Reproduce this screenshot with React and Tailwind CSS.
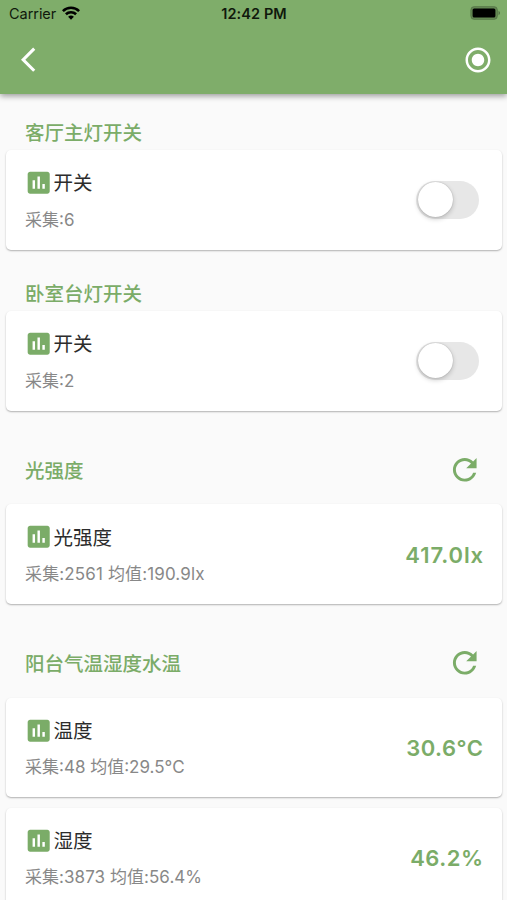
import React from 'react';

const SWITCHES = [
  { title: '客厅主灯开关', name: '开关', detail: '采集:6', gap: 'h-[56px] pt-[21px]' },
  { title: '卧室台灯开关', name: '开关', detail: '采集:2', gap: 'h-[61.5px] pt-[26px]' },
];

const SENSORS = [
  {
    title: '光强度',
    cards: [
      {
        name: '光强度',
        detail: '采集:2561 均值:190.9lx',
        detailSpacing: 'tracking-[0.13px]',
        value: '417.0lx',
        valueSpacing: 'tracking-[0.9px] mr-[18px]',
      },
    ],
  },
  {
    title: '阳台气温湿度水温',
    cards: [
      { name: '温度', detail: '采集:48 均值:29.5°C', value: '30.6°C', valueSpacing: 'tracking-[0.5px] mr-[18.5px]' },
      {
        name: '湿度',
        detail: '采集:3873 均值:56.4%',
        detailSpacing: 'tracking-[0.05px]',
        value: '46.2%',
        valueSpacing: 'tracking-[0.5px] mr-[18.5px]',
      },
    ],
  },
];

function Icon({ d, className }) {
  return (
    <svg viewBox="0 0 24 24" fill="currentColor" className={className}>
      <path d={d} />
    </svg>
  );
}

const CHART =
  'M19 3H5c-1.1 0-2 .9-2 2v14c0 1.1.9 2 2 2h14c1.1 0 2-.9 2-2V5c0-1.1-.9-2-2-2zM9 17H7v-7h2v7zm4 0h-2V7h2v10zm4 0h-2v-4h2v4z';
const REFRESH =
  'M17.65 6.35C16.2 4.9 14.21 4 12 4c-4.42 0-7.99 3.58-7.99 8s3.57 8 7.99 8c3.73 0 6.84-2.55 7.73-6h-2.08c-.82 2.33-3.04 4-5.65 4-3.31 0-6-2.69-6-6s2.69-6 6-6c1.66 0 3.14.69 4.22 1.78L13 11h7V4l-2.35 2.35z';
const BACK = 'M11.67 3.87L9.9 2.1 0 12l9.9 9.9 1.77-1.77L3.54 12z';
const RADIO =
  'M12 7c-2.76 0-5 2.24-5 5s2.24 5 5 5 5-2.24 5-5-2.24-5-5-5zm0-5C6.48 2 2 6.48 2 12s4.48 10 10 10 10-4.48 10-10S17.52 2 12 2zm0 18c-4.42 0-8-3.58-8-8s3.58-8 8-8 8 3.58 8 8-3.58 8-8 8z';

function StatusBar() {
  return (
    <div className="grid h-7 grid-cols-3 items-center pl-[9px] pr-[6px] text-[14.5px] leading-7 text-[#10190c]">
      <div className="flex items-center gap-[6px]">
        <span className="tracking-[-0.05px]">Carrier</span>
        <svg viewBox="0 0 18 14" className="-mt-[2px] h-[14px] w-[18px]">
          <g fill="none" stroke="#000" strokeWidth="2.6">
            <path d="M.9 5.1a11.6 11.6 0 0 1 16.2 0" />
            <path d="M3.9 8.3a7.3 7.3 0 0 1 10.2 0" />
          </g>
          <path d="M9 13.8l-2.9-3a4.2 4.2 0 0 1 5.8 0z" fill="#000" />
        </svg>
      </div>
      <div className="-ml-[2px] whitespace-nowrap text-center font-semibold tracking-[0.1px]">12:42 PM</div>
      <svg viewBox="0 0 31 14" className="-mt-[2px] h-[14px] w-[31px] justify-self-end">
        <rect x="0.7" y="0.4" width="26.8" height="13.2" rx="3.8" fill="#000" fillOpacity=".22" stroke="#000" strokeOpacity=".22" strokeWidth=".8" />
        <rect x="2.6" y="2.4" width="22.8" height="9.2" rx="1.6" fill="#000" />
        <path d="M28.6 4.8c1.6.8 1.6 3.6 0 4.4z" fill="#000" fillOpacity=".45" />
      </svg>
    </div>
  );
}

function Card({ name, detail, detailSpacing = '', children }) {
  return (
    <div className="ml-[6px] mr-[5px] flex h-[99.5px] shrink-0 items-center justify-between rounded-[5px] bg-white pl-[19px] shadow-[0_1px_2px_rgba(0,0,0,0.26),0_1px_1px_rgba(0,0,0,0.05)]">
      <div className="flex flex-col pt-px">
        <div className="flex h-[30px] items-center">
          <Icon d={CHART} className="-ml-px size-[29.4px] text-[#7bac68]" />
          <span className="pt-px text-[19.5px] leading-[30px] text-[#2c2c2c]">{name}</span>
        </div>
        <span className={`-mb-px mt-[8px] whitespace-nowrap text-[17px] leading-[28px] text-[#888] ${detailSpacing}`}>
          {detail}
        </span>
      </div>
      {children}
    </div>
  );
}

function Toggle() {
  return (
    <button className="mr-[23px] flex h-[38px] w-[63px] items-center rounded-full bg-[#e7e7e7] pl-[1.5px]">
      <span className="size-[35px] rounded-full bg-white shadow-[0_2px_5px_rgba(0,0,0,0.2),0_0_1px_rgba(0,0,0,0.3)]" />
    </button>
  );
}

export default function App() {
  return (
    <div className="flex h-[900px] w-[507px] flex-col overflow-hidden bg-[#fafafa] font-['Inter','Noto_Sans_CJK_SC',sans-serif]">
      <header className="z-10 h-[94px] shrink-0 bg-[#7fad6a] shadow-[0_2px_6px_rgba(0,0,0,0.4)]">
        <StatusBar />
        <div className="flex h-[63px] items-center justify-between pl-[20.5px] pr-[14.5px] text-white">
          <Icon d={BACK} className="size-[29.4px]" />
          <Icon d={RADIO} className="size-[30px]" />
        </div>
      </header>
      <main className="flex min-h-0 flex-1 flex-col">
        {SWITCHES.map((s) => (
          <section key={s.title} className="shrink-0">
            <h2 className={`pl-[25px] text-[19.5px] font-medium leading-[37px] text-[#7bac68] ${s.gap}`}>{s.title}</h2>
            <Card name={s.name} detail={s.detail}>
              <Toggle />
            </Card>
          </section>
        ))}
        {SENSORS.map((s) => (
          <section key={s.title} className="shrink-0">
            <div className="flex h-[93.75px] items-center justify-between pb-px pl-[25px] pr-[24.5px] pt-[25px] text-[#7bac68]">
              <h2 className="mt-[3px] text-[19.5px] font-medium leading-[30px]">{s.title}</h2>
              <Icon d={REFRESH} className="size-[35.5px]" />
            </div>
            <div className="flex flex-col gap-[10.5px]">
              {s.cards.map((c) => (
                <Card key={c.name} name={c.name} detail={c.detail} detailSpacing={c.detailSpacing}>
                  <span className={`pt-[2px] text-[22px] font-semibold text-[#7bac68] ${c.valueSpacing}`}>{c.value}</span>
                </Card>
              ))}
            </div>
          </section>
        ))}
      </main>
    </div>
  );
}
